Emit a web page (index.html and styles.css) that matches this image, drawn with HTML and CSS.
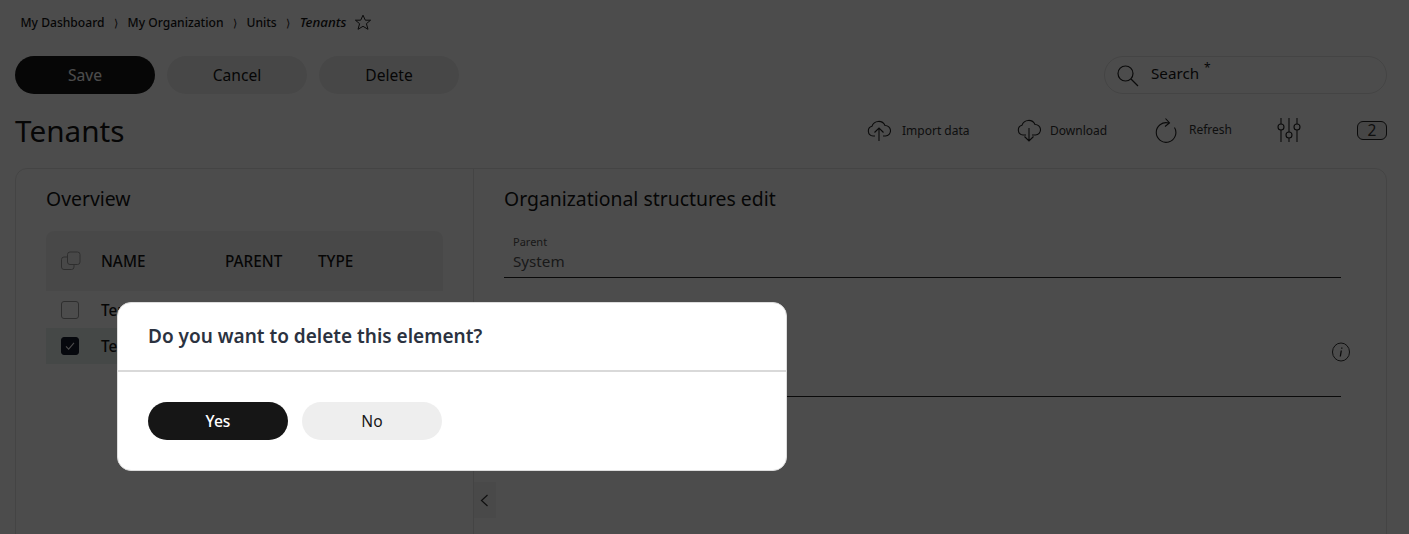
FILE: index.html
```html
<!DOCTYPE html>
<html lang="en">
<head>
<meta charset="utf-8">
<title>Tenants</title>
<link rel="stylesheet" href="styles.css">
</head>
<body>
<div class="page">
  <nav class="crumbs">
    <a>My Dashboard</a><span class="sep">⟩</span>
    <a>My Organization</a><span class="sep">⟩</span>
    <a>Units</a><span class="sep">⟩</span>
    <em>Tenants</em>
    <svg class="star" width="18" height="17" viewBox="0 0 18 17"><path d="M9 1.200l2.300 5h5.300l-4.200 3.500 1.600 5.600L9 12.300l-5 3 1.600-5.600L1.400 6.200h5.300z" fill="none" stroke="#222" stroke-width="1"/></svg>
  </nav>
  <div class="actions">
    <button class="btn primary">Save</button>
    <button class="btn">Cancel</button>
    <button class="btn">Delete</button>
    <div class="search">
      <svg width="24" height="24" viewBox="0 0 24 24"><circle cx="10.500" cy="10.500" r="7.500" fill="none" stroke="#222" stroke-width="1.200"/><path d="M16 16l7 7" stroke="#222" stroke-width="1.200"/></svg>
      <span>Search</span><sup>*</sup>
    </div>
  </div>
  <header class="title-row">
    <h1>Tenants</h1>
    <div class="tools">
      <div class="tool import">
        <svg width="24" height="24" viewBox="0 0 24 24"><path d="M8 18H6a5 5 0 0 1-1-9.800A7 7 0 0 1 18 7.500a5 5 0 0 1 .5 10.500H16M12 23V10M7.500 14.500L12 10l4.500 4.500" fill="none" stroke="#222" stroke-width="1.100"/></svg>
        <span>Import data</span>
      </div>
      <div class="tool download">
        <svg width="24" height="24" viewBox="0 0 24 24"><path d="M9 17H6a5 5 0 0 1-1-9.800A7 7 0 0 1 18 6.500a5 5 0 0 1 .5 10.500H15M12 10v13M7.500 18.500L12 23l4.500-4.500" fill="none" stroke="#222" stroke-width="1.100"/></svg>
        <span>Download</span>
      </div>
      <div class="tool refresh">
        <svg width="24" height="26" viewBox="0 0 24 26"><path d="M20.500 10.500A9.800 9.800 0 1 1 14.500 6M11.500 1.500L15.500 6 11 9.500" fill="none" stroke="#222" stroke-width="1.100"/></svg>
        <span>Refresh</span>
      </div>
      <svg class="sliders" width="24" height="26" viewBox="0 0 24 26"><g fill="none" stroke="#222" stroke-width="1.100"><path d="M4 1v6M4 13v12M12 1v14M12 21v4M20 1v6M20 13v12"/><circle cx="4" cy="10" r="3"/><circle cx="12" cy="18" r="3"/><circle cx="20" cy="10" r="3"/></g></svg>
      <span class="count">2</span>
    </div>
  </header>
  <main class="panel">
    <section class="overview">
      <h2>Overview</h2>
      <div class="table">
        <div class="thead">
          <svg class="copy" width="20" height="20" viewBox="0 0 20 20"><g fill="none" stroke="#9a9a9a" stroke-width="1"><rect x="6.500" y="1" width="12.500" height="12.500" rx="2.500"/><path d="M6.500 6H3a2.500 2.500 0 0 0-2.500 2.500V16A2.500 2.500 0 0 0 3 18.500h7.500A2.500 2.500 0 0 0 13 16v-2.500"/></g></svg>
          <span class="col-name">NAME</span>
          <span class="col-parent">PARENT</span>
          <span class="col-type">TYPE</span>
        </div>
        <div class="row"><i class="box"></i><span>Tenant</span></div>
        <div class="row selected">
          <i class="box checked"><svg width="18" height="18" viewBox="0 0 18 18"><path d="M4.500 9.500l3 3 6-7" fill="none" stroke="#fff" stroke-width="1.200"/></svg></i>
          <span>Tenant</span>
        </div>
      </div>
    </section>
    <section class="edit">
      <h2>Organizational structures edit</h2>
      <div class="field">
        <label>Parent</label>
        <div class="value">System</div>
      </div>
      <div class="field second">
        <svg class="info" width="20" height="20" viewBox="0 0 20 20"><ellipse cx="10" cy="10" rx="8.500" ry="9" fill="none" stroke="#333" stroke-width="1"/><path d="M10.800 5.500v1.200M10.300 8.500L9.300 14.500" stroke="#222" stroke-width="1.300" fill="none"/></svg>
      </div>
      <button class="collapse" aria-label="Collapse"><svg width="9" height="13" viewBox="0 0 9 13"><path d="M7.500 1L1.500 6.500l6 5.500" fill="none" stroke="#333" stroke-width="1.200"/></svg></button>
    </section>
  </main>
</div>
<div class="overlay"></div>
<div class="modal" role="dialog">
  <h3>Do you want to delete this element?</h3>
  <div class="modal-actions">
    <button class="btn primary">Yes</button>
    <button class="btn">No</button>
  </div>
</div>
</body>
</html>
```
FILE: styles.css
```css
* { box-sizing: border-box; }
html, body { margin: 0; height: 100%; overflow: hidden; }
body { background: #fff; color: #161616; font-family: "Noto Sans", sans-serif; }
.page { height: 534px; padding: 0 22px 0 15px; overflow: hidden; }

.crumbs { height: 44px; display: flex; align-items: center; padding-left: 5.500px; font-size: 12.100px; font-weight: 500; }
.crumbs .sep { width: 23px; text-align: center; font-size: 11px; font-weight: 400; }
.crumbs em { font-weight: 500; font-size: 13.300px; }
.star { margin-left: 8px; }

.actions { height: 38px; margin-top: 12px; display: flex; gap: 12px; }
.btn { width: 140px; height: 38px; border: 0; border-radius: 19px; background: #eeeeee; color: #161616; font: 400 15.600px "Noto Sans", sans-serif; padding: 0; }
.btn.primary { background: #161616; color: #fff; }
.search { margin-left: auto; width: 283px; height: 38px; border: 1px solid #e4e4e4; border-radius: 19px; display: flex; align-items: center; padding: 0 0 1px 10px; font-size: 15.200px; }
.search span { margin: -4px 0 0 12px; }
.search sup { font-size: 12px; line-height: 1; margin: -14px 0 0 5px; }

.title-row { height: 74px; display: flex; align-items: center; justify-content: space-between; padding-bottom: 2px; }
h1 { margin: 2px 0 0; font-size: 29.700px; font-weight: 400; line-height: 1.300; }
.tools { display: flex; align-items: center; font-size: 12px; color: #333; }
.tool { display: flex; align-items: center; gap: 10px; }
.import { width: 150px; gap: 11px; }
.download { width: 137px; gap: 9px; }
.refresh { width: 123px; gap: 11px; }
.refresh span { margin-top: -1px; }
.sliders { margin-right: 56px; }
.count { width: 30px; height: 19px; border: 1px solid #222; border-radius: 6px; display: flex; align-items: center; justify-content: center; font-size: 15.500px; background: #e9e9e9; }

.panel { height: 420px; display: flex; border: 1px solid #e4e4e4; border-radius: 12px 12px 0 0; }
h2 { margin: 0; font-size: 19.400px; font-weight: 400; line-height: 26px; }
.overview { width: 458px; border-right: 1px solid #e4e4e4; padding: 17px 30px; }
.table { margin-top: 19px; width: 397px; }
.thead { height: 60px; background: #f2f2f2; border-radius: 8px 8px 0 0; display: flex; align-items: center; padding-left: 15px; font-size: 15.300px; font-weight: 500; }
.copy { margin-right: 20px; }
.col-name { width: 124px; }
.col-parent { width: 93px; }
.row { height: 37px; display: flex; align-items: center; padding-left: 15px; font-size: 15.300px; font-weight: 500; }
.row span { margin-left: 22px; }
.row.selected { background: #e6f0ef; height: 36px; }
.box { width: 18px; height: 18px; border: 1px solid #999; border-radius: 3px; display: block; }
.box.checked { background: #161b2c; border-color: #161b2c; display: flex; align-items: center; justify-content: center; }

.edit { flex: 1; position: relative; padding: 17px 45px 0 30px; }
.field { position: relative; margin-top: 18px; height: 48px; border-bottom: 1px solid #222; padding-left: 9px; }
.field label { display: block; font-size: 11px; line-height: 15px; color: #555; padding-top: 4px; }
.value { font-size: 15.200px; line-height: 22px; color: #555; margin-top: 1px; }
.field.second { margin-top: 0; height: 119px; }
.info { position: absolute; right: -10px; top: 64px; }
.collapse { position: absolute; left: 0; top: 313px; width: 22px; height: 36px; border: 0; padding: 0 2px 0 0; background: #f3f3f3; display: flex; align-items: center; justify-content: center; }

.overlay { position: fixed; inset: 0; background: rgba(0, 0, 0, .7); }
.modal { position: fixed; left: 117px; top: 302px; width: 670px; height: 169px; background: #fff; border: 1px solid #ddd; border-radius: 14px; }
.modal h3 { margin: 0; height: 69px; padding: 18px 30px 0; font-size: 19px; font-weight: 600; line-height: 30px; color: #2b3240; border-bottom: 2px solid #d9d9d9; }
.modal-actions { display: flex; gap: 14px; padding: 30px 30px 0; }
.modal .btn.primary { font-weight: 500; }
```
